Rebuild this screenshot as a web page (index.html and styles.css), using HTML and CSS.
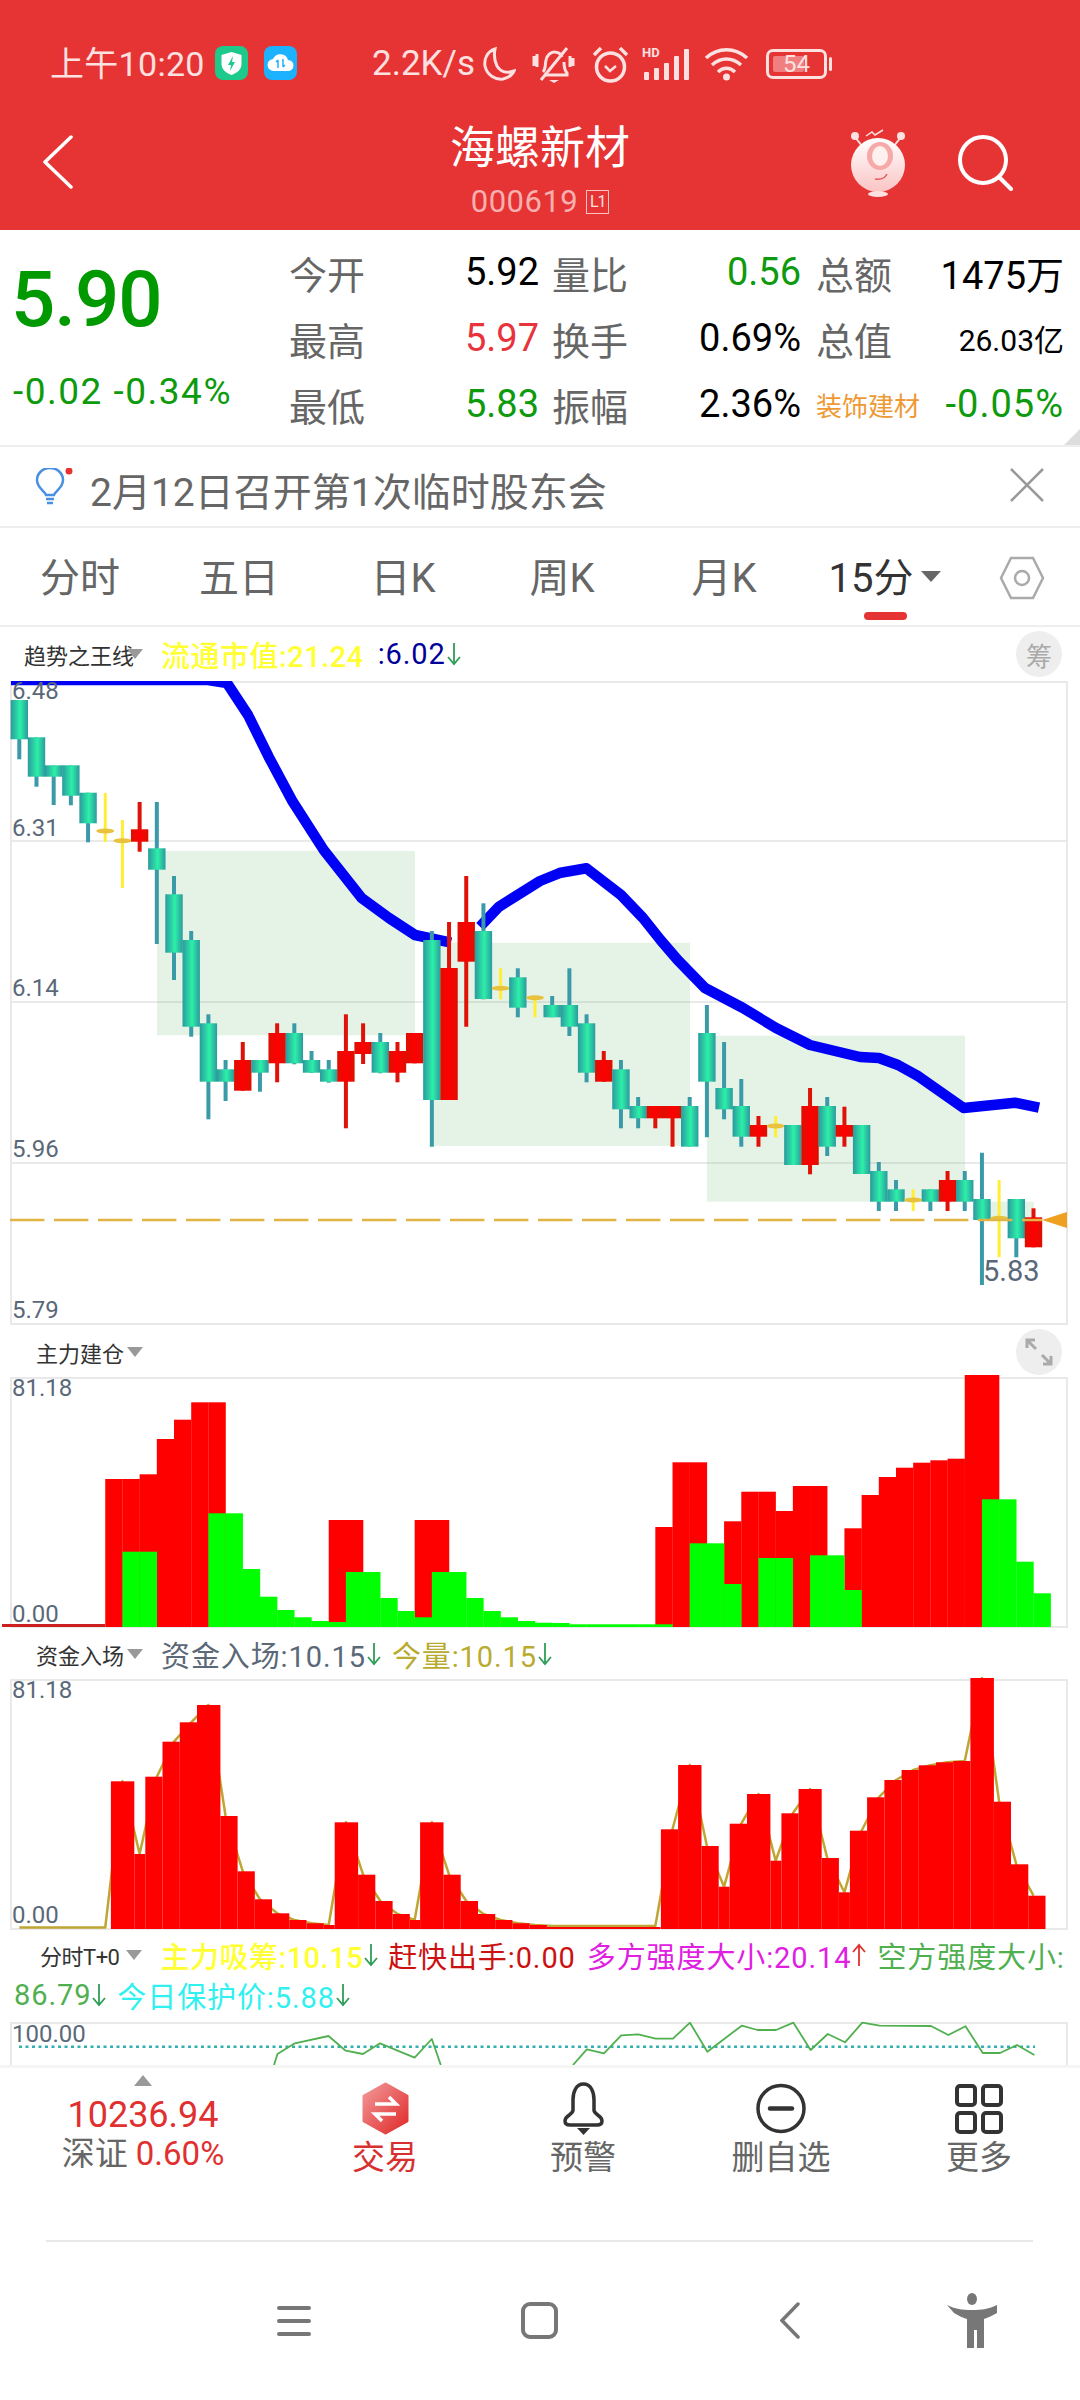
FILE: index.html
```html
<!DOCTYPE html>
<html lang="zh-CN">
  <head>
    <meta charset="utf-8">
    <title>海螺新材 000619</title>
    <link rel="stylesheet" href="styles.css">
  </head>
  <body>

    <div class="header">
      <div class="status">
        <span class="time">上午10:20</span>
        <svg class="badge" width="33" height="34" viewBox="0 0 33 34">
          <rect width="33" height="34" rx="8" fill="#1ec98c"/>
          <path d="M16.5 6l10 3v9c0 6-5 9-10 11-5-2-10-5-10-11V9z" fill="#fff"/>
          <path d="M18 10l-5 9h3l-1 6 5-9h-3z" fill="#1ec98c"/>
        </svg>
        <svg class="badge second" width="33" height="34" viewBox="0 0 33 34">
          <rect width="33" height="34" rx="8" fill="#1db2ff"/>
          <path d="M10 25a6 6 0 0 1-1-12 8 8 0 0 1 15 1 5.500 5.500 0 0 1 0 11z" fill="#fff"/>
          <path d="M14 14v8M12 16l2-2M19 13v8M21 19l-2 2" stroke="#1db2ff" stroke-width="1.500" fill="none"/>
        </svg>
        <span class="speed">2.2K/s</span>
        <svg class="st-moon" width="34" height="36" viewBox="0 0 34 36" fill="none" stroke="#fde0e0" stroke-width="3">
          <path d="M13 3C5 6 2 13 3 20c2 9 10 14 18 13 5-1 9-4 11-8-8 3-14 0-17-5-3-6-3-12-2-17z"/>
        </svg>
        <svg class="st-mute" width="43" height="38" viewBox="0 0 43 38" fill="none" stroke="#fde0e0" stroke-width="3">
          <path d="M11 26c3-3 2-8 3-12 1-5 5-8 8-8 4 0 7 2 8 5M32 16c0 4 0 8 3 11v2H13"/>
          <path d="M35 2L9 34M2 10v10M5 8v13M38 10v11M41 12v8"/>
          <path d="M17 34h10l-5 3z" fill="#fde0e0" stroke="none"/>
        </svg>
        <svg class="st-alarm" width="39" height="37" viewBox="0 0 39 37" fill="none" stroke="#fde0e0" stroke-width="3.500">
          <circle cx="19.500" cy="21" r="14"/>
          <path d="M3 9l7-7M36 9l-7-7"/>
          <path d="M14 20l5 5 6-5" stroke-width="2.500"/>
        </svg>
        <div class="st-signal">
          <span class="hd">HD</span>
          <svg width="49" height="32" viewBox="0 0 49 32" fill="#fde0e0">
            <rect x="2" y="24" width="5" height="8" rx="1"/>
            <rect x="12" y="20" width="5" height="12" rx="1"/>
            <rect x="22" y="15" width="5" height="17" rx="1"/>
            <rect x="32" y="8" width="5" height="24" rx="1"/>
            <rect x="42" y="1" width="5" height="31" rx="1"/>
          </svg>
        </div>
        <svg class="st-wifi" width="45" height="36" viewBox="0 0 45 36" fill="none" stroke="#fde0e0" stroke-width="3.500">
          <path d="M2 12C14 1 31 1 43 12M8 19c9-8 20-8 29 0M14 26c5-5 12-5 17 0"/>
          <circle cx="22.500" cy="31" r="3.500" fill="#fde0e0" stroke="none"/>
        </svg>
        <div class="battery">
          <div class="cell"><span class="cell-fill"></span><span class="cell-num">54</span></div>
          <span class="cap"></span>
        </div>
      </div>

      <div class="titlebar">
        <div class="tb-left">
          <svg width="30" height="54" viewBox="0 0 30 54" fill="none" stroke="#fff" stroke-width="3.500" stroke-linecap="round" stroke-linejoin="round">
            <path d="M28 2L2 27l26 25"/>
          </svg>
        </div>
        <div class="tb-title">
          <div class="name">海螺新材</div>
          <div class="code">000619<span class="level">L1</span></div>
        </div>
        <div class="tb-right">
          <svg width="54" height="68" viewBox="0 0 54 68">
            <defs>
              <linearGradient id="robot" x1="0" y1="0" x2="0" y2="1">
                <stop offset="0" stop-color="#ffffff"/>
                <stop offset="1" stop-color="#fbc4c4"/>
              </linearGradient>
            </defs>
            <path d="M4 8l7 9M50 8l-7 9" stroke="#fde0e0" stroke-width="2"/>
            <circle cx="4" cy="7" r="4" fill="#fde0e0"/>
            <circle cx="50" cy="7" r="4" fill="#fde0e0"/>
            <path d="M15 7l6-4 3 3 8-5" stroke="#fde0e0" stroke-width="1.500" fill="none"/>
            <ellipse cx="27" cy="36" rx="27" ry="27" fill="url(#robot)"/>
            <ellipse cx="29" cy="27" rx="13" ry="14" fill="#f7a8a8"/>
            <ellipse cx="29" cy="27" rx="8" ry="10" fill="#fff0f0"/>
            <path d="M24 50c6 1 10-1 12-5" stroke="#e85a5a" stroke-width="1.500" fill="none"/>
            <ellipse cx="27" cy="65" rx="10" ry="3" fill="#fde0e0"/>
          </svg>
          <svg width="56" height="56" viewBox="0 0 56 56" fill="none" stroke="#fff" stroke-width="4" stroke-linecap="round">
            <circle cx="25" cy="25" r="23"/>
            <path d="M41 42l12 12"/>
          </svg>
        </div>
      </div>
    </div>

    <div class="quote">
      <div class="quote-left">
        <div class="last">5.90</div>
        <div class="change">-0.02 -0.34%</div>
      </div>
      <div class="stats">
        <span class="lab">今开</span><span class="val">5.92</span>
        <span class="lab mid">量比</span><span class="val down">0.56</span>
        <span class="lab end">总额</span><span class="val">1475万</span>

        <span class="lab">最高</span><span class="val up">5.97</span>
        <span class="lab mid">换手</span><span class="val">0.69%</span>
        <span class="lab end">总值</span><span class="val small">26.03亿</span>

        <span class="lab">最低</span><span class="val down">5.83</span>
        <span class="lab mid">振幅</span><span class="val">2.36%</span>
        <span class="lab end sector">装饰建材</span><span class="val down wide">-0.05%</span>
      </div>
      <span class="corner"></span>
    </div>

    <div class="notice">
      <svg width="40" height="38" viewBox="0 0 40 38" fill="none" stroke="#4a90e2" stroke-width="2.500">
        <path d="M13 27c-1-4-9-7-9-15a13 12 0 0 1 26 0c0 8-8 11-9 15z"/>
        <path d="M13 31h8M14 35h6"/>
        <circle cx="36" cy="3" r="3.500" fill="#e83232" stroke="none"/>
      </svg>
      <span class="notice-text">2月12日召开第1次临时股东会</span>
      <svg class="notice-close" width="36" height="36" viewBox="0 0 36 36" stroke="#999" stroke-width="2.500">
        <path d="M2 2l32 32M34 2L2 34"/>
      </svg>
    </div>

    <div class="tabs">
      <div class="tab t1">分时</div>
      <div class="tab t2">五日</div>
      <div class="tab t3">日K</div>
      <div class="tab t4">周K</div>
      <div class="tab t5">月K</div>
      <div class="tab t6 on">
        <div class="on-text">15分<span class="tab-caret"></span></div>
        <span class="under"></span>
      </div>
      <svg class="tab-gear" width="46" height="44" viewBox="0 0 46 44" fill="none" stroke="#aaa" stroke-width="2.500">
        <path d="M12 2h22l10 20-10 20H12L2 22z"/>
        <circle cx="23" cy="22" r="7"/>
      </svg>
    </div>

    <div class="charts">
      <div class="bar b54">
        <span class="ind first">趋势之王线</span><span class="caret"></span>
        <span class="v yellow">流通市值:21.24</span>
        <span class="v navy">:6.02</span>
        <svg class="arrow" width="16" height="26" viewBox="0 0 16 26"><path d="M8 2v21M2 16l6 7 6-7"/></svg>
        <span class="round">筹</span>
      </div>
      <svg id="kline" class="plot" width="1080" height="645" viewBox="0 681 1080 645"></svg>

      <div class="bar b51">
        <span class="ind">主力建仓</span><span class="caret"></span>
        <span class="round">
          <svg width="30" height="30" viewBox="0 0 30 30" fill="none" stroke="#aaa" stroke-width="3">
            <path d="M3 11V3h8M3 3l9 9M27 19v8h-8M27 27l-9-9"/>
          </svg>
        </span>
      </div>
      <svg id="build" class="plot" width="1080" height="251" viewBox="0 1377 1080 251"></svg>

      <div class="bar b51">
        <span class="ind">资金入场</span><span class="caret"></span>
        <span class="v grey">资金入场:10.15</span>
        <svg class="arrow" width="16" height="26" viewBox="0 0 16 26"><path d="M8 2v21M2 16l6 7 6-7"/></svg>
        <span class="v olive">今量:10.15</span>
        <svg class="arrow" width="16" height="26" viewBox="0 0 16 26"><path d="M8 2v21M2 16l6 7 6-7"/></svg>
      </div>
      <svg id="funds" class="plot" width="1080" height="252" viewBox="0 1679 1080 252"></svg>

      <div class="bar-t0">
        <div class="t0-row one">
          <span class="ind tight">分时T+0</span><span class="caret"></span>
          <span class="v yellow">主力吸筹:10.15</span>
          <svg class="arrow" width="16" height="26" viewBox="0 0 16 26"><path d="M8 2v21M2 16l6 7 6-7"/></svg>
          <span class="v dark-red">赶快出手:0.00</span>
          <span class="v magenta">多方强度大小:20.14</span>
          <svg class="arrow red" width="16" height="26" viewBox="0 0 16 26"><path d="M8 24V3M2 10l6-7 6 7"/></svg>
          <span class="v green">空方强度大小:</span>
        </div>
        <div class="t0-row two">
          <span class="v green">86.79</span>
          <svg class="arrow" width="16" height="26" viewBox="0 0 16 26"><path d="M8 2v21M2 16l6 7 6-7"/></svg>
          <span class="v cyan">今日保护价:5.88</span>
          <svg class="arrow" width="16" height="26" viewBox="0 0 16 26"><path d="M8 2v21M2 16l6 7 6-7"/></svg>
        </div>
      </div>
      <svg id="t0" class="plot" width="1080" height="43" viewBox="0 2022 1080 43"></svg>
    </div>

    <div class="nav">
      <div class="nav-index">
        <span class="index-caret"></span>
        <div class="index-val">10236.94</div>
        <div class="index-sub">深证 <b>0.60%</b></div>
      </div>
      <div class="nav-item active">
        <svg width="47" height="53" viewBox="0 0 47 53">
          <defs>
            <linearGradient id="hex" x1="0" y1="0" x2="1" y2="1">
              <stop offset="0" stop-color="#f29a9a"/>
              <stop offset="1" stop-color="#e02828"/>
            </linearGradient>
          </defs>
          <path d="M23.500 2L45 14v25L23.500 51 2 39V14z" fill="url(#hex)" stroke="url(#hex)" stroke-width="3" stroke-linejoin="round"/>
          <path d="M13 22h21l-7-7M34 32H13l7 7" fill="none" stroke="#fff" stroke-width="3.500"/>
        </svg>
        <span>交易</span>
      </div>
      <div class="nav-item">
        <svg width="43" height="53" viewBox="0 0 43 53">
          <path d="M21.500 2C14 2 11 10 11 18v10c0 5-8 5-8 11 0 3 2 4 5 4h27c3 0 5-1 5-4 0-6-8-6-8-11V18c0-8-3-16-10.500-16z" fill="none" stroke="#333" stroke-width="3.500"/>
          <path d="M15 46h13l-6.500 7z" fill="#333"/>
        </svg>
        <span>预警</span>
      </div>
      <div class="nav-item">
        <svg width="50" height="53" viewBox="0 0 50 53" fill="none" stroke="#333" stroke-width="3.500" stroke-linecap="round">
          <circle cx="25" cy="26.500" r="23"/>
          <path d="M14 26.500h22" stroke-width="4.500"/>
        </svg>
        <span>删自选</span>
      </div>
      <div class="nav-item">
        <svg width="48" height="53" viewBox="0 0 48 53" fill="none" stroke="#333" stroke-width="4">
          <rect x="2" y="4" width="18" height="19" rx="3"/>
          <rect x="28" y="4" width="18" height="19" rx="3"/>
          <rect x="2" y="31" width="18" height="19" rx="3"/>
          <rect x="28" y="31" width="18" height="19" rx="3"/>
        </svg>
        <span>更多</span>
      </div>
    </div>

    <div class="rule"></div>

    <div class="sysnav">
      <svg class="sys-menu" width="34" height="32" viewBox="0 0 34 32" stroke="#777" stroke-width="4" stroke-linecap="round">
        <path d="M2 3h30M2 16h30M2 29h30"/>
      </svg>
      <svg class="sys-home" width="37" height="37" viewBox="0 0 37 37" fill="none" stroke="#777" stroke-width="4">
        <rect x="2" y="2" width="33" height="33" rx="7"/>
      </svg>
      <svg class="sys-back" width="20" height="37" viewBox="0 0 20 37" fill="none" stroke="#777" stroke-width="3.500" stroke-linecap="round">
        <path d="M18 2L2 18.500 18 35"/>
      </svg>
      <svg class="sys-man" width="50" height="55" viewBox="0 0 50 55" fill="#777">
        <ellipse cx="25" cy="6" rx="5" ry="6"/>
        <path d="M0 12c8 4 15 5 25 5s17-1 25-5v8c-5 3-10 5-13 6v29h-7V37h-3v18h-7V26c-4-1-8-3-13-6z"/>
      </svg>
    </div>

    <script src="chart.js"></script>
  </body>
</html>
```

FILE: styles.css
```css
* {
  box-sizing: border-box;
}

body {
  margin: 0;
  width: 1080px;
  height: 2400px;
  overflow: hidden;
  background: #ffffff;
  font-family: Roboto, "Noto Sans CJK SC", sans-serif;
}

/* header */

.header {
  height: 230px;
  background: #e63333;
}

.status {
  height: 110px;
  padding: 46px 0 0 50px;
  display: flex;
  align-items: flex-start;
  color: #fde0e0;
}

.time {
  width: 165px;
  font-size: 34px;
  line-height: 36px;
  letter-spacing: 0.3px;
}

.badge {
  flex: none;
}

.badge.second {
  margin-left: 16px;
}

.speed {
  width: 110px;
  margin-left: 75px;
  font-size: 35px;
  line-height: 36px;
}

.st-moon {
  flex: none;
}

.st-mute {
  margin-left: 16px;
  flex: none;
}

.st-alarm {
  margin-left: 16px;
  flex: none;
}

.st-signal {
  width: 49px;
  height: 34px;
  margin-left: 12px;
  display: flex;
  align-items: flex-end;
  position: relative;
}

.hd {
  position: absolute;
  left: 0;
  top: 0;
  font-size: 13px;
  line-height: 14px;
  font-weight: 700;
}

.st-wifi {
  margin-left: 13px;
  flex: none;
}

.battery {
  margin-left: 17px;
  margin-top: 3px;
  display: flex;
  align-items: center;
}

.cell {
  width: 61px;
  height: 30px;
  padding: 4px;
  border: 3px solid #fde0e0;
  border-radius: 7px;
  display: flex;
  position: relative;
}

.cell-fill {
  width: 31px;
  border-radius: 2px;
  background: #f08080;
}

.cell-num {
  position: absolute;
  left: 14px;
  top: -3px;
  font-size: 24px;
  line-height: 30px;
  color: #fde0e0;
}

.cap {
  width: 3px;
  height: 14px;
  margin-left: 2px;
  border-radius: 2px;
  background: #fde0e0;
}

.titlebar {
  height: 120px;
  display: grid;
  grid-template-columns: 1fr auto 1fr;
}

.tb-left {
  padding: 25px 0 0 43px;
}

.tb-title {
  padding-top: 14px;
  display: flex;
  flex-direction: column;
  align-items: center;
}

.name {
  font-size: 45px;
  line-height: 50px;
  color: #fff;
}

.code {
  margin-top: 8px;
  display: flex;
  align-items: center;
  font-size: 31px;
  line-height: 40px;
  letter-spacing: 0.5px;
  color: #f7b0b0;
}

.level {
  width: 23px;
  height: 24px;
  margin-left: 8px;
  border: 1px solid #f7c4c4;
  font-size: 16px;
  line-height: 22px;
  letter-spacing: -1px;
  text-align: center;
  color: #fde0e0;
}

.tb-right {
  padding: 19px 66px 0 0;
  display: flex;
  justify-content: flex-end;
  align-items: flex-start;
  gap: 53px;
}

.tb-right svg:last-child {
  margin-top: 6px;
}

/* quote */

.quote {
  height: 217px;
  border-bottom: 2px solid #eeeeee;
  display: flex;
  position: relative;
}

.quote-left {
  width: 289px;
  padding: 30px 0 0 11px;
}

.last {
  font-size: 78px;
  line-height: 80px;
  font-weight: 500;
  letter-spacing: -1px;
  color: #009900;
}

.change {
  margin-top: 32px;
  margin-left: 2px;
  font-size: 37px;
  line-height: 40px;
  letter-spacing: 1.5px;
  white-space: nowrap;
  color: #0d9a0d;
}

.stats {
  padding-top: 9px;
  display: grid;
  grid-template-columns: 75px 175px 89px 173px 91px 172px;
  grid-auto-rows: 66px;
  align-items: center;
}

.lab {
  font-size: 38px;
  color: #666666;
  white-space: nowrap;
}

.lab.mid {
  padding-left: 13px;
}

.lab.end {
  padding-left: 15px;
}

.lab.sector {
  padding-left: 15px;
  font-size: 26px;
  color: #ee9933;
}

.val {
  font-size: 38px;
  text-align: right;
  color: #000000;
  white-space: nowrap;
}

.val.up {
  color: #e8323c;
}

.val.down {
  color: #0d9a0d;
}

.val.small {
  font-size: 30px;
}

.val.wide {
  letter-spacing: 1px;
}

.corner {
  position: absolute;
  right: 0;
  bottom: 0;
  width: 0;
  height: 0;
  border-left: 16px solid transparent;
  border-bottom: 16px solid #dddddd;
}

/* notice */

.notice {
  height: 81px;
  padding: 0 35px 0 33px;
  border-bottom: 2px solid #eeeeee;
  display: flex;
  align-items: center;
}

.notice-text {
  margin-left: 17px;
  padding-top: 4px;
  font-size: 39px;
  color: #666666;
}

.notice-close {
  margin-left: auto;
  margin-top: -4px;
}

/* tabs */

.tabs {
  height: 99px;
  padding-top: 26px;
  border-bottom: 2px solid #eeeeee;
  display: flex;
  align-items: flex-start;
}

.tab {
  font-size: 40px;
  line-height: 50px;
  text-align: center;
  color: #666666;
}

.t1 { width: 160px; }
.t2 { width: 158px; }
.t3 { width: 170px; }
.t4 { width: 148px; }
.t5 { width: 176px; }

.t6 {
  width: 146px;
  display: flex;
  flex-direction: column;
  align-items: center;
  color: #333333;
}

.on-text {
  display: flex;
  align-items: center;
}

.tab-caret {
  width: 0;
  height: 0;
  margin-left: 8px;
  margin-top: -6px;
  border-left: 10px solid transparent;
  border-right: 10px solid transparent;
  border-top: 11px solid #666666;
}

.under {
  width: 43px;
  height: 8px;
  margin-top: 8px;
  border-radius: 4px;
  background: #e63333;
}

.tab-gear {
  margin: 2px 0 0 41px;
}

/* charts */

.charts {
  height: 1438px;
  overflow: hidden;
}

.plot {
  display: block;
  overflow: visible;
}

.bar {
  display: flex;
  align-items: center;
  padding-left: 36px;
}

.b54 {
  height: 54px;
  padding-left: 24px;
}

.b51 {
  height: 51px;
}

.ind {
  font-size: 22px;
  color: #333333;
  white-space: nowrap;
}

.ind.first {
  margin-right: -10px;
}

.ind.tight {
  margin-right: 4px;
  letter-spacing: -0.5px;
}

.caret {
  width: 0;
  height: 0;
  margin: 0 18px 0 3px;
  border-left: 8px solid transparent;
  border-right: 8px solid transparent;
  border-top: 10px solid #999999;
}

.v {
  font-size: 29px;
  letter-spacing: 0.9px;
  white-space: nowrap;
}

.yellow { color: #ffff33; font-weight: 500; letter-spacing: 0.5px; }
.navy { color: #000099; margin-left: 14px; }
.grey { color: #5a6878; }
.olive { color: #b9ab30; margin-left: 10px; }
.dark-red { color: #cc1111; margin-left: 9px; }
.magenta { color: #e020e0; margin-left: 11px; }
.green { color: #50b050; margin-left: 10px; }
.cyan { color: #30f0f0; margin-left: 10px; }

.arrow {
  flex: none;
  fill: none;
  stroke: #2f9e57;
  stroke-width: 1.8;
}

.arrow.red {
  stroke: #e03030;
}

.round {
  width: 46px;
  height: 46px;
  margin: 0 18px 0 auto;
  border-radius: 50%;
  background: #eeeeee;
  display: flex;
  align-items: center;
  justify-content: center;
  font-size: 26px;
  color: #aaaaaa;
}

.bar-t0 {
  height: 91px;
  padding-top: 4px;
}

.t0-row {
  height: 40px;
  display: flex;
  align-items: center;
}

.t0-row.one {
  padding-left: 40px;
}

.t0-row.two {
  padding-left: 4px;
}

.axis {
  font-size: 24px;
  fill: #5a6878;
}

.axis-low {
  font-size: 29px;
  fill: #5a6878;
}

/* bottom nav */

.nav {
  height: 175px;
  border-top: 3px solid #f5f5f5;
  display: grid;
  grid-template-columns: 286px repeat(4, 198px);
}

.nav-index {
  padding-top: 7px;
  display: flex;
  flex-direction: column;
  align-items: center;
}

.index-caret {
  width: 0;
  height: 0;
  border-left: 9px solid transparent;
  border-right: 9px solid transparent;
  border-bottom: 11px solid #999999;
}

.index-val {
  margin-top: 9px;
  font-size: 36px;
  line-height: 40px;
  color: #e03030;
}

.index-sub {
  font-size: 33px;
  line-height: 38px;
  color: #666666;
}

.index-sub b {
  font-weight: 400;
  color: #e03030;
}

.nav-item {
  padding-top: 14px;
  display: flex;
  flex-direction: column;
  align-items: center;
  font-size: 33px;
  line-height: 40px;
  color: #666666;
}

.nav-item span {
  margin-top: 3px;
}

.nav-item.active {
  color: #d83030;
}

.rule {
  height: 2px;
  margin: 0 47px 0 46px;
  background: #e8e8e8;
}

.sysnav {
  height: 158px;
  padding-left: 277px;
  display: flex;
  align-items: flex-start;
}

.sys-menu {
  margin-top: 63px;
}

.sys-home {
  margin: 60px 0 0 210px;
}

.sys-back {
  margin: 60px 0 0 222px;
}

.sys-man {
  margin: 51px 0 0 147px;
}
```

FILE: chart.js
```js
// all y values are page pixels, the svg viewBoxes are set up for that

const slot = 17.19;
const cx = i => 19.3 + i * slot;

function line(x1, y1, x2, y2, color, w) {
  return `<line x1="${x1}" y1="${y1}" x2="${x2}" y2="${y2}" stroke="${color}" stroke-width="${w}"/>`;
}

function rect(x, y, w, h, fill, extra) {
  return `<rect x="${x}" y="${y}" width="${w}" height="${h}" fill="${fill}" ${extra || ''}/>`;
}

function poly(points, color, w) {
  return `<polyline points="${points.join(' ')}" fill="none" stroke="${color}" stroke-width="${w}" stroke-linejoin="round"/>`;
}

function label(x, y, text, cls) {
  return `<text x="${x}" y="${y}" class="${cls || 'axis'}">${text}</text>`;
}

function frame(top, bottom) {
  const c = '#e9e9e9';
  return line(11, top, 11, bottom, c, 2) + line(1067, top, 1067, bottom, c, 2) +
    line(10, top + 1, 1068, top + 1, c, 2) + line(10, bottom, 1068, bottom, c, 2);
}

// candles: top, bottom, high, low, type
const candles = [
  [700, 739.3, 700, 759.3, 'g'],
  [737.3, 776.7, 737.3, 786.7, 'g'],
  [765.3, 776.7, 765.3, 805, 'g'],
  [765.3, 795.7, 765.3, 805.3, 'g'],
  [792.7, 823.3, 792.7, 842.3, 'g'],
  [831, 831, 793, 842, 'y'],
  [840.7, 840.7, 820, 888, 'y'],
  [829.3, 841.7, 802, 851.7, 'r'],
  [848.3, 869.7, 802, 944, 'g'],
  [894.3, 952.7, 876, 980, 'g'],
  [940, 1026.7, 931, 1036.7, 'g'],
  [1023.3, 1081.7, 1014.3, 1119.3, 'g'],
  [1069.3, 1081.7, 1060, 1101, 'g'],
  [1060, 1090.7, 1042, 1090.7, 'r'],
  [1060, 1072.7, 1060, 1091.7, 'g'],
  [1033, 1063.3, 1023.3, 1082.3, 'r'],
  [1033, 1063.3, 1023.3, 1064.3, 'g'],
  [1060, 1072.7, 1051, 1073, 'g'],
  [1069.3, 1081.7, 1060, 1082.7, 'g'],
  [1051, 1081.7, 1014.3, 1128.3, 'r'],
  [1042, 1054, 1023.3, 1064, 'r'],
  [1042, 1072.7, 1033, 1073.3, 'g'],
  [1051, 1072.7, 1042, 1082.3, 'r'],
  [1033, 1063.3, 1033, 1063.3, 'r'],
  [940, 1100, 931, 1146.7, 'g'],
  [968, 1100, 922, 1100, 'r'],
  [922, 961.7, 876, 1026.7, 'r'],
  [931, 999, 903.3, 999.3, 'g'],
  [988.3, 988.3, 968.3, 999.3, 'y'],
  [977.3, 1007.7, 968.3, 1017.3, 'g'],
  [997.7, 997.7, 997.7, 1017.3, 'y'],
  [1005, 1017.3, 996, 1017.3, 'g'],
  [1005, 1026.7, 968.3, 1036, 'g'],
  [1023.3, 1072.7, 1014.3, 1082.3, 'g'],
  [1060, 1081.7, 1051, 1081.7, 'r'],
  [1069.3, 1109.3, 1060, 1128.3, 'g'],
  [1106, 1118.3, 1097, 1128.3, 'g'],
  [1106, 1118.3, 1106, 1128.3, 'r'],
  [1106, 1118.3, 1106, 1146.7, 'r'],
  [1106, 1146.7, 1097, 1146.7, 'g'],
  [1033, 1081.7, 1005, 1137.3, 'g'],
  [1088, 1109.3, 1042, 1119.3, 'g'],
  [1106, 1136.7, 1079, 1146.7, 'g'],
  [1125, 1136.7, 1116, 1146.7, 'r'],
  [1126, 1126, 1116, 1137.3, 'y'],
  [1125, 1165, 1125, 1165, 'g'],
  [1106, 1165, 1088, 1174.3, 'r'],
  [1106, 1146.7, 1097, 1156, 'g'],
  [1125, 1136.7, 1106.7, 1146.7, 'r'],
  [1125, 1174, 1125, 1174, 'g'],
  [1171, 1201.7, 1162, 1211, 'g'],
  [1189.3, 1201.7, 1180, 1211, 'g'],
  [1200, 1200, 1189.3, 1211, 'y'],
  [1189.3, 1201.7, 1189.3, 1211, 'g'],
  [1180, 1201.7, 1171, 1211, 'r'],
  [1180, 1201.7, 1171, 1211, 'g'],
  [1199, 1220, 1152.7, 1285, 'g'],
  [1218.3, 1218.3, 1180, 1257.3, 'y'],
  [1199, 1238.3, 1199, 1257.3, 'g'],
  [1217.3, 1247.3, 1208.3, 1247.3, 'r']
];

const wickColor = { g: '#3a9aa8', r: '#de1208', y: '#ffee33' };

function drawKline() {
  let s = `<defs>
    <clipPath id="plotArea"><rect x="0" y="681" width="1080" height="645"/></clipPath>
    <linearGradient id="teal"><stop offset="0" stop-color="#2b9a9e"/><stop offset=".55" stop-color="#2cf0a8"/><stop offset="1" stop-color="#2b9a9e"/></linearGradient>
    <linearGradient id="redBody"><stop offset="0" stop-color="#dc1000"/><stop offset=".5" stop-color="#ff0000"/><stop offset="1" stop-color="#dc1000"/></linearGradient>
  </defs>`;

  s += frame(681, 1324);
  [841, 1002, 1163].forEach(y => { s += line(11, y, 1067, y, '#e9e9e9', 2); });

  // pale zones behind the candles
  const zone = 'rgba(110, 190, 120, 0.18)';
  s += rect(157, 851, 258, 184.3, zone);
  s += rect(432, 942.7, 258, 203.3, zone);
  s += rect(707, 1035.7, 258, 166, zone);
  s += rect(982, 1201.7, 52, 18.3, zone);

  // the thick blue line, with a gap around the big candles
  s += '<g clip-path="url(#plotArea)">';
  s += poly(['11,680', '208,680', '227,683', '248,715', '268.6,756.7', '292.7,801.7', '323.7,850', '361.6,898',
    '389,918', '415,935', '451,942.7'], '#0000f5', 10.5);
  s += '</g>';
  s += poly(['480,926.7', '499,906.7', '540,881', '560.7,872.7', '586.5,868.3', '621,895', '643,918', '660.5,940',
    '677.7,960', '705,988', '743,1008', '776,1028', '810,1045', '860,1057', '879,1058', '898,1065', '919,1076.7',
    '963.6,1108', '1015,1102.7', '1039,1107.7'], '#0000f5', 10.5);

  candles.forEach((c, i) => {
    const x = cx(i);
    s += line(x, c[2], x, c[3], wickColor[c[4]], c[4] == 'y' ? 3 : 4);
    if (c[4] == 'y') {
      s += `<ellipse cx="${x}" cy="${c[0]}" rx="9" ry="2.5" fill="#e8c23c"/>`;
    } else {
      s += rect(x - 8.7, c[0], 17.4, c[1] - c[0], c[4] == 'g' ? 'url(#teal)' : 'url(#redBody)');
    }
  });

  // last price
  s += `<line x1="10" y1="1220" x2="1042" y2="1220" stroke="#e2b445" stroke-width="2.5" stroke-dasharray="34.400 9.600"/>`;
  s += `<polygon points="1042,1220 1067,1212 1067,1228" fill="#f0a020"/>`;

  s += label(12, 699, '6.48') + label(12, 836, '6.31') + label(12, 996, '6.14') +
    label(12, 1157, '5.96') + label(12, 1318, '5.79');
  s += label(983, 1281, '5.83', 'axis-low');

  document.getElementById('kline').innerHTML = s;
}

// bars start at the centre of their slot: index, top
const buildRed = [[5, 1479], [6, 1479], [7, 1474.3], [8, 1439], [9, 1419.7], [10, 1402.3], [11, 1402.3],
  [18, 1520], [19, 1520], [23, 1520], [24, 1520],
  [37, 1527], [38, 1462.3], [39, 1462.3], [41, 1521.3], [42, 1491.7], [43, 1491.7], [44, 1511], [45, 1486], [46, 1486],
  [48, 1528.3], [49, 1495], [50, 1477], [51, 1467.7], [52, 1462.7], [53, 1460.3], [54, 1458.7], [55, 1375], [56, 1375]];

const buildGreen = [[6, 1551.7], [7, 1551.7], [11, 1513.3], [12, 1513.3], [13, 1569], [14, 1596.7], [15, 1610],
  [16, 1617.3], [17, 1621], [18, 1622], [19, 1572], [20, 1572], [21, 1598], [22, 1611], [23, 1617.3],
  [24, 1572], [25, 1572], [26, 1598], [27, 1611], [28, 1617.3], [29, 1621], [30, 1622.7], [31, 1623], [32, 1624.3], [33, 1624.3],
  [34, 1624.3], [35, 1624.3], [36, 1624.3], [37, 1624.3], [39, 1543.3], [40, 1543.3], [41, 1584], [43, 1558], [44, 1558],
  [46, 1555.3], [47, 1555.3], [48, 1590], [56, 1499.3], [57, 1499.3], [58, 1561.7], [59, 1593.3]];

function drawBuild() {
  const base = 1627;
  let s = frame(1377, 1627);
  s += rect(2, 1624, 103, 3, '#cc2020');
  buildRed.forEach(d => { s += rect(cx(d[0]), d[1], slot + 0.2, base - d[1], '#ff0000'); });
  buildGreen.forEach(d => { s += rect(cx(d[0]), d[1], slot + 0.2, base - d[1], '#00ff00'); });
  s += label(12, 1396, '81.18') + label(12, 1622, '0.00');
  document.getElementById('build').innerHTML = s;
}

// left edge, right edge, top
const fundBars = [[110.9, 134.3, 1781.3], [134.3, 145.3, 1854], [145.3, 162.5, 1776.7], [162.5, 179.8, 1741.7],
  [179.8, 197, 1722.3], [197, 220.4, 1705], [220.4, 237.6, 1816], [237.6, 254.8, 1871.3], [254.8, 272, 1899.3],
  [272, 289.3, 1913.3], [289.3, 306.5, 1920], [306.5, 323.7, 1923.3], [323.7, 334.7, 1925], [334.7, 358.1, 1822.3],
  [358.1, 375.3, 1874.7], [375.3, 392.6, 1901], [392.6, 409.8, 1914], [409.8, 420.1, 1920], [420.1, 443.5, 1822.3],
  [443.5, 460.7, 1874.7], [460.7, 478, 1901], [478, 495.2, 1914], [495.2, 512.4, 1920], [512.4, 529.6, 1923.3],
  [529.6, 546.9, 1925], [546.9, 660.5, 1927], [660.9, 678.1, 1829.3], [678.1, 701.5, 1765], [701.5, 718.7, 1846],
  [718.7, 729.7, 1886.7], [729.7, 747, 1823.7], [747, 770.4, 1794], [770.4, 781.4, 1860.7], [781.4, 798.6, 1813.3],
  [798.6, 821.7, 1789], [821.7, 838.9, 1858], [838.9, 849.9, 1892.3], [849.9, 867.1, 1830.7], [867.1, 884.4, 1797.3],
  [884.4, 901.6, 1780], [901.6, 918.8, 1770], [918.8, 936, 1765.3], [936, 953.2, 1762.3], [953.2, 970.4, 1761],
  [970.4, 993.9, 1678], [993.9, 1011, 1801.7], [1011, 1028.3, 1864.3], [1028.3, 1045.5, 1895.7]];

// the olive line runs behind the bars and shows in the notches
const fundLine = [1927.5, 1927.5, 1927.5, 1927.5, 1927.5, 1927.5, 1781.3, 1854, 1776.7, 1741.7, 1722.3, 1705, 1816, 1871.3, 1899.3,
  1913.3, 1920, 1923.3, 1925, 1822.3, 1874.7, 1901, 1914, 1920, 1822.3, 1874.7, 1901, 1914, 1920, 1923.3, 1925, 1926, 1926,
  1926, 1926, 1926, 1926, 1926, 1829.3, 1765, 1846, 1886.7, 1823.7, 1794, 1860.7, 1813.3, 1789, 1858, 1892.3, 1830.7, 1797.3,
  1780, 1770, 1765.3, 1762.3, 1761, 1678, 1801.7, 1864.3, 1895.7];

function drawFunds() {
  const base = 1929;
  let s = frame(1679, 1929);
  s += poly(fundLine.map((y, i) => cx(i) + ',' + y), '#bfa634', 2.5);
  fundBars.forEach(d => { s += rect(d[0], d[2], d[1] - d[0], base - d[2], '#ff0000'); });
  s += label(12, 1698, '81.18') + label(12, 1923, '0.00');
  document.getElementById('funds').innerHTML = s;
}

function drawT0() {
  const c = '#e9e9e9';
  let s = line(11, 2023, 1067, 2023, c, 2) + line(11, 2022, 11, 2065, c, 2) + line(1067, 2022, 1067, 2065, c, 2);
  s += `<line x1="19" y1="2046.7" x2="1035" y2="2046.7" stroke="#30b0b0" stroke-width="2.5" stroke-dasharray="3 3.500"/>`;
  s += poly(['274,2065', '277.5,2054', '294.8,2043.3', '328.5,2036', '345.7,2050.7', '363,2054', '380,2043.3', '414.6,2057.7',
    '431.8,2039', '440.8,2065'], '#50b050', 1.8);
  s += poly(['573,2065', '586.8,2049.3', '604,2053.3', '621.2,2035.3', '638.4,2034.3', '655.6,2038.7', '672.9,2038.7', '690,2022.7',
    '707.3,2051.7', '741.7,2025.7', '757.6,2030', '776,2030', '793.4,2022.7', '810.6,2050', '827.8,2034', '845,2042.3', '862.3,2022.7',
    '879.5,2025.7', '931,2026', '948.3,2035', '965.5,2026.3', '982.8,2053', '1000,2053', '1017,2045', '1034.4,2055'], '#50b050', 1.8);
  s += label(12, 2042, '100.00');
  document.getElementById('t0').innerHTML = s;
}

drawKline();
drawBuild();
drawFunds();
drawT0();
```
